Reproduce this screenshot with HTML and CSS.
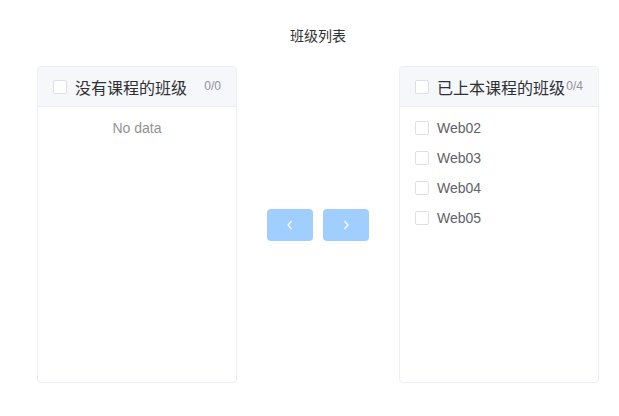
FILE: index.html
```html
<!DOCTYPE html>
<html>
<head>
<meta charset="utf-8">
<link rel="stylesheet" href="styles.css">
</head>
<body>
<div class="page">
  <div class="title">班级列表</div>
  <div class="transfer">
    <div class="panel">
      <div class="panel-header">
        <span class="checkbox"></span>
        <span class="header-label">没有课程的班级</span>
        <span class="count">0/0</span>
      </div>
      <div class="panel-body">
        <div class="empty">No data</div>
      </div>
    </div>
    <div class="buttons">
      <div class="btn">
        <svg width="12" height="12" viewBox="0 0 12 12"><path d="M7.5 2 L4 6 L7.5 10" fill="none" stroke="#fff" stroke-width="1.2"/></svg>
      </div>
      <div class="btn">
        <svg width="12" height="12" viewBox="0 0 12 12"><path d="M4.5 2 L8 6 L4.5 10" fill="none" stroke="#fff" stroke-width="1.2"/></svg>
      </div>
    </div>
    <div class="panel">
      <div class="panel-header">
        <span class="checkbox"></span>
        <span class="header-label">已上本课程的班级</span>
        <span class="count">0/4</span>
      </div>
      <div class="panel-body list">
        <div class="item"><span class="checkbox"></span><span class="item-label">Web02</span></div>
        <div class="item"><span class="checkbox"></span><span class="item-label">Web03</span></div>
        <div class="item"><span class="checkbox"></span><span class="item-label">Web04</span></div>
        <div class="item"><span class="checkbox"></span><span class="item-label">Web05</span></div>
      </div>
    </div>
  </div>
</div>
</body>
</html>
```

FILE: styles.css
```css
html, body {
  margin: 0;
  padding: 0;
  background: #fff;
}
body {
  font-family: "Liberation Sans", "Noto Sans CJK SC", Arial, sans-serif;
}
.page {
  padding-left: 37px;
  width: 562px;
}
.title {
  height: 20px;
  line-height: 20px;
  margin-top: 26px;
  margin-bottom: 20px;
  text-align: center;
  font-size: 14px;
  color: #303133;
}
.transfer {
  display: flex;
  align-items: center;
}
.panel {
  width: 198px;
  height: 315px;
  border: 1px solid #ebeef5;
  border-radius: 4px;
  background: #fff;
  overflow: hidden;
  flex: none;
}
.panel-header {
  height: 39px;
  background: #f5f7fa;
  border-bottom: 1px solid #ebeef5;
  display: flex;
  align-items: center;
  padding-left: 15px;
  position: relative;
}
.checkbox {
  width: 12px;
  height: 12px;
  border: 1px solid #dcdfe6;
  border-radius: 2px;
  background: #fff;
  flex: none;
  display: inline-block;
}
.header-label {
  margin-left: 8px;
  font-size: 16px;
  color: #303133;
  font-family: "Noto Sans CJK SC", sans-serif;
  line-height: 20px;
}
.count {
  position: absolute;
  right: 15px;
  top: 0;
  line-height: 39px;
  font-size: 12px;
  color: #909399;
}
.panel-body {
  padding-top: 6px;
}
.empty {
  height: 30px;
  line-height: 30px;
  text-align: center;
  font-size: 14px;
  color: #909399;
}
.item {
  height: 30px;
  display: flex;
  align-items: center;
  padding-left: 15px;
}
.item-label {
  margin-left: 8px;
  font-size: 14px;
  color: #606266;
}
.buttons {
  display: flex;
  gap: 10px;
  padding: 0 30px;
  flex: none;
}
.btn {
  width: 46px;
  height: 32px;
  border-radius: 4px;
  background: #a0cfff;
  display: flex;
  align-items: center;
  justify-content: center;
}
```
